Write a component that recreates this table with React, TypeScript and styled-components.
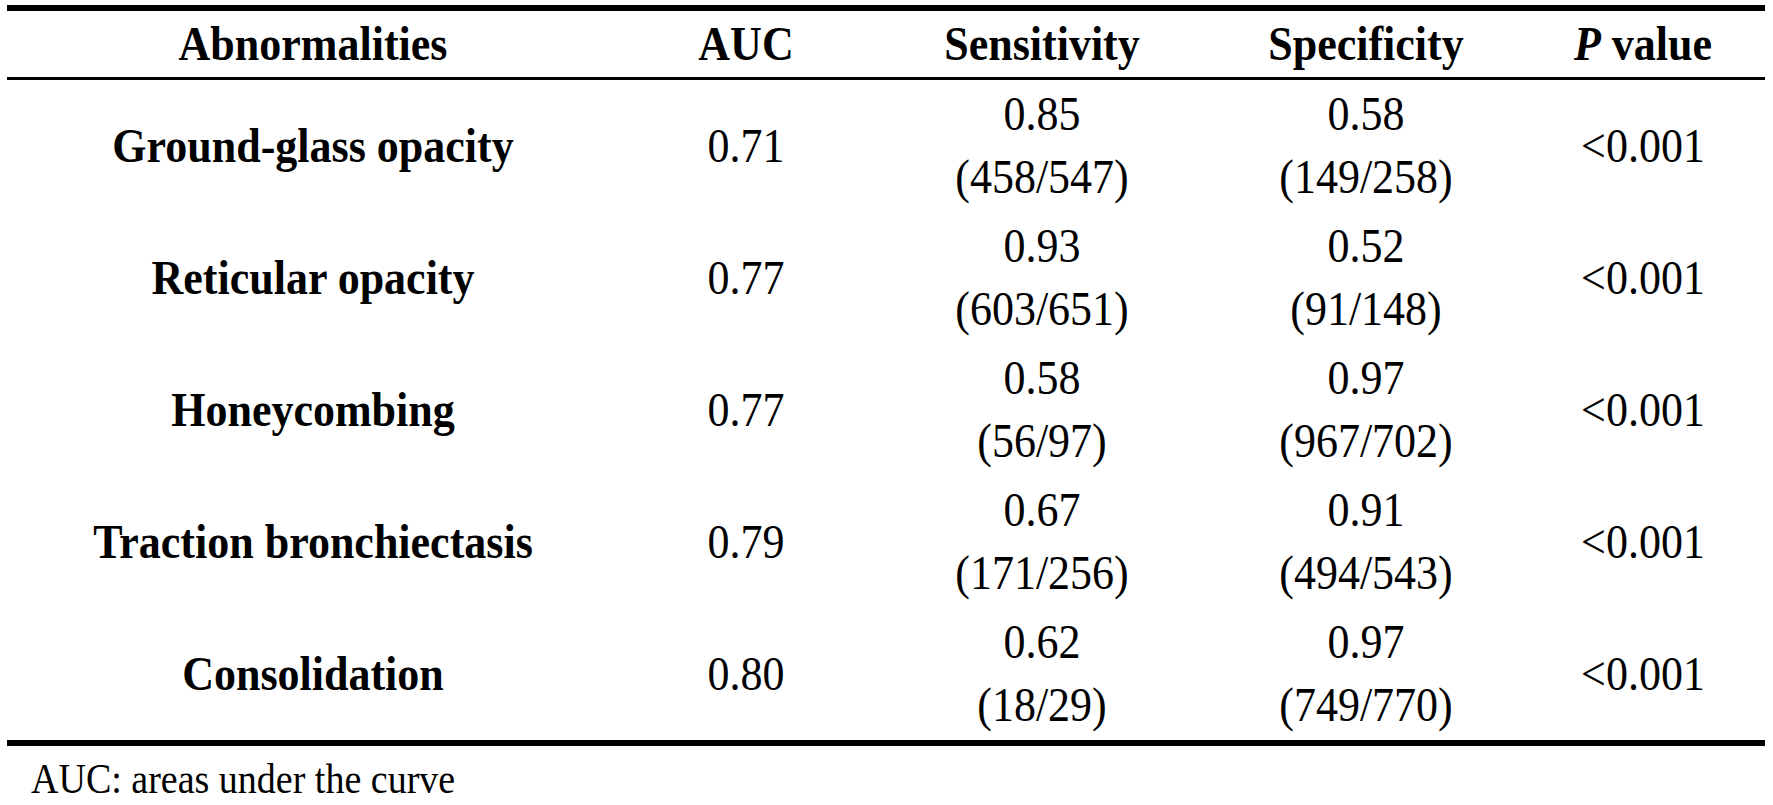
import React from "react";
import styled, { createGlobalStyle } from "styled-components";

const GlobalStyle = createGlobalStyle`
  html, body {
    margin: 0;
    padding: 0;
    background: #ffffff;
  }
  body {
    font-family: "Liberation Serif", "Times New Roman", serif;
    color: #000000;
  }
`;

const Page = styled.div`
  padding: 5px 8px 0 7px;
`;

const Table = styled.div`
  display: grid;
  grid-template-columns: 612px 254px 338px 310px 244px;
  width: 1758px;
  border-top: 6px solid #000;
  border-bottom: 6px solid #000;
`;

const HeadCell = styled.div`
  height: 66px;
  border-bottom: 3px solid #000;
  display: flex;
  align-items: center;
  justify-content: center;
  font-size: 44px;
  line-height: 63px;
  font-weight: bold;
  white-space: nowrap;
`;

const Cell = styled.div<{ $bold?: boolean }>`
  height: 132px;
  display: flex;
  flex-direction: column;
  align-items: center;
  justify-content: center;
  font-size: 44px;
  line-height: 63px;
  font-weight: ${(p) => (p.$bold ? "bold" : "normal")};
  white-space: nowrap;
`;

const Text = styled.span`
  display: inline-block;
  transform: scaleY(1.1);
`;

const Footnote = styled.p`
  margin: 11px 0 0 0;
  padding-left: 24px;
  font-size: 38px;
  line-height: 44px;
`;

type Row = {
  name: string;
  auc: string;
  sens: [string, string];
  spec: [string, string];
  p: string;
};

const rows: Row[] = [
  { name: "Ground-glass opacity", auc: "0.71", sens: ["0.85", "(458/547)"], spec: ["0.58", "(149/258)"], p: "<0.001" },
  { name: "Reticular opacity", auc: "0.77", sens: ["0.93", "(603/651)"], spec: ["0.52", "(91/148)"], p: "<0.001" },
  { name: "Honeycombing", auc: "0.77", sens: ["0.58", "(56/97)"], spec: ["0.97", "(967/702)"], p: "<0.001" },
  { name: "Traction bronchiectasis", auc: "0.79", sens: ["0.67", "(171/256)"], spec: ["0.91", "(494/543)"], p: "<0.001" },
  { name: "Consolidation", auc: "0.80", sens: ["0.62", "(18/29)"], spec: ["0.97", "(749/770)"], p: "<0.001" },
];

export default function App() {
  return (
    <>
      <GlobalStyle />
      <Page>
        <Table>
          <HeadCell><Text>Abnormalities</Text></HeadCell>
          <HeadCell><Text>AUC</Text></HeadCell>
          <HeadCell><Text>Sensitivity</Text></HeadCell>
          <HeadCell><Text>Specificity</Text></HeadCell>
          <HeadCell>
            <Text>
              <i>P</i>&nbsp;value
            </Text>
          </HeadCell>
          {rows.map((r) => (
            <React.Fragment key={r.name}>
              <Cell $bold><Text>{r.name}</Text></Cell>
              <Cell><Text>{r.auc}</Text></Cell>
              <Cell>
                <Text>{r.sens[0]}</Text>
                <Text>{r.sens[1]}</Text>
              </Cell>
              <Cell>
                <Text>{r.spec[0]}</Text>
                <Text>{r.spec[1]}</Text>
              </Cell>
              <Cell><Text>{r.p}</Text></Cell>
            </React.Fragment>
          ))}
        </Table>
        <Footnote><Text>AUC: areas under the curve</Text></Footnote>
      </Page>
    </>
  );
}
